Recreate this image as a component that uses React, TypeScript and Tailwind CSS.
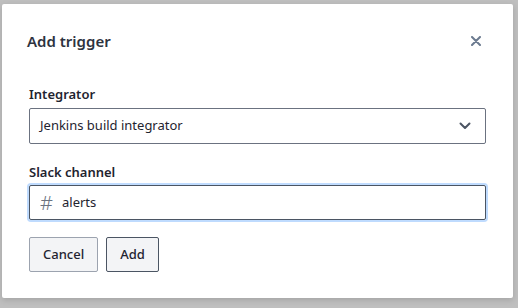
import { useState } from 'react';

export default function App() {
  const [channel, setChannel] = useState('alerts');

  return (
    <div className="w-[518px] h-[308px] bg-[#bfbfbf] pt-[4px] pl-[2px] font-['Noto_Sans',sans-serif]">
      <div className="w-[511px] h-[294px] bg-white rounded-[2px] shadow-[0_2px_6px_rgba(0,0,0,0.15)] flex flex-col">
        {/* header */}
        <div className="flex items-center justify-between pl-[25px] pr-[31px] pt-[25px] h-[49px]">
          <h2 className="text-[15px] leading-[24px] font-semibold text-[#2d3340]">Add trigger</h2>
          <button className="text-[#6b7a8f] w-[12px] h-[12px] flex items-center justify-center">
            <svg width="10" height="10" viewBox="0 0 10 10" fill="none" stroke="currentColor" strokeWidth="2" strokeLinecap="round">
              <path d="M1 1l8 8M9 1l-8 8" />
            </svg>
          </button>
        </div>

        {/* body */}
        <div className="px-[27px] pt-[31px] flex flex-col">
          <label className="text-[13px] leading-[20px] font-semibold text-[#1f2430] mb-[4px]">Integrator</label>
          <div className="h-[36px] w-[457px] border border-[#6b7280] rounded-[2px] flex items-center justify-between pl-[10px] pr-[14px]">
            <span className="text-[13px] text-[#1f2430]">Jenkins build integrator</span>
            <svg width="12" height="8" viewBox="0 0 12 8" fill="none" stroke="#4b5563" strokeWidth="2" strokeLinecap="round" strokeLinejoin="round">
              <path d="M1.5 1.5l4.5 4.5 4.5-4.5" />
            </svg>
          </div>

          <label className="text-[13px] leading-[20px] font-semibold text-[#1f2430] mt-[18px] mb-[3px]">Slack channel</label>
          <div className="h-[35px] w-[457px] border border-[#4b5563] rounded-[2px] ring-2 ring-[#bfdbfe] flex items-center pl-[10px] pr-[10px]">
            <span className="text-[20px] font-light text-[#6b7280] w-[22px] leading-none">#</span>
            <input
              value={channel}
              onChange={(e) => setChannel(e.target.value)}
              className="flex-1 outline-none text-[13px] text-[#1f2430] bg-transparent"
            />
          </div>

          <div className="flex gap-[8px] mt-[17px]">
            <button className="h-[35px] px-[13px] bg-[#f3f4f6] border border-[#9ca3af] rounded-[2px] text-[13px] font-medium text-[#1f2430]">
              Cancel
            </button>
            <button className="h-[35px] px-[13px] bg-[#f3f4f6] border border-[#4b5563] rounded-[2px] text-[13px] font-medium text-[#1f2430]">
              Add
            </button>
          </div>
        </div>
      </div>
    </div>
  );
}
